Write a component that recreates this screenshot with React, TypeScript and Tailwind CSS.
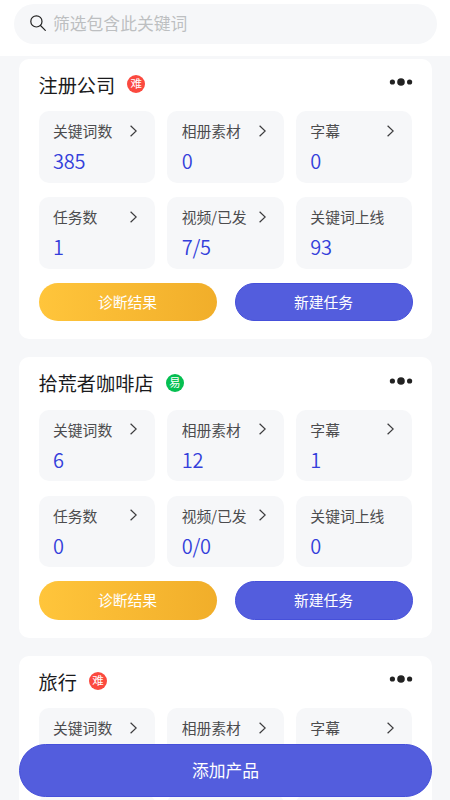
type Stat = { label: string; value: string; arrow?: boolean };
type Product = { name: string; level: "难" | "易"; stats: Stat[]; pending?: boolean };

const labels = ["关键词数", "相册素材", "字幕", "任务数", "视频/已发", "关键词上线"];

const makeStats = (values: string[]): Stat[] =>
  values.map((value, i) => ({ label: labels[i], value, arrow: i < 5 }));

const products: Product[] = [
  { name: "注册公司", level: "难", stats: makeStats(["385", "0", "0", "1", "7/5", "93"]) },
  { name: "拾荒者咖啡店", level: "易", stats: makeStats(["6", "12", "1", "0", "0/0", "0"]) },
  { name: "旅行", level: "难", stats: makeStats(["", "", ""]), pending: true },
];

function SearchIcon() {
  return (
    <svg className="-mt-0.5 h-4 w-4 shrink-0" viewBox="0 0 16 16" fill="none" stroke="#222" strokeWidth="1.2" strokeLinecap="round">
      <circle cx="6.4" cy="6.4" r="5.6" />
      <path d="M10.5 10.5L15.3 15.3" />
    </svg>
  );
}

function Chevron() {
  return (
    <svg className="-mt-px h-3 w-[7px] shrink-0" viewBox="0 0 7 12" fill="none" stroke="#3c3c3e" strokeWidth="1.2">
      <path d="M0.6 0.7L6.2 6L0.6 11.3" />
    </svg>
  );
}

function MoreIcon() {
  return (
    <svg className="h-2 w-6" viewBox="0 0 24 8" fill="#222">
      <circle cx="3.4" cy="4" r="2.6" />
      <circle cx="12" cy="4" r="3.8" />
      <circle cx="20.6" cy="4" r="2.6" />
    </svg>
  );
}

function StatTile({ stat }: { stat: Stat }) {
  return (
    <div className="h-[71.5px] rounded-[10px] bg-[#f6f7f9] pl-[14.5px] pr-[18px] pt-2.5">
      <div className="flex h-5 items-center justify-between whitespace-nowrap text-[14.8px] leading-5 text-[#4c4c4e]">
        <span>{stat.label}</span>
        {stat.arrow && <Chevron />}
      </div>
      <div className="mt-2 text-[20px] font-[350] leading-6 tracking-[-0.2px] text-[#343fdb]">{stat.value}</div>
    </div>
  );
}

function ProductCard({ product }: { product: Product }) {
  return (
    <section className="h-[280.5px] shrink-0 rounded-[10px] bg-white px-[19.5px]">
      <div className="flex h-[52.5px] items-center justify-between">
        <div className="flex items-center gap-3">
          <h2 className="-mt-px text-[19.2px] leading-7 text-[#1b1b1d]">{product.name}</h2>
          <span
            className={`-mt-0.5 flex h-[18px] w-[18px] items-center justify-center rounded-full text-[11.5px] leading-none text-white ${
              product.level === "难" ? "bg-[#fb493f]" : "bg-[#05bf51]"
            }`}
          >
            {product.level}
          </span>
        </div>
        <button className="mb-1.5" aria-label="更多">
          <MoreIcon />
        </button>
      </div>
      <div className="grid grid-cols-3 gap-x-3 gap-y-[14.5px]">
        {product.stats.map((stat) => (
          <StatTile key={stat.label} stat={stat} />
        ))}
        {product.pending &&
          [0, 1, 2].map((i) => <div key={i} className="h-[71.5px] rounded-[10px] bg-[#f6f7f9]" />)}
      </div>
      {!product.pending && (
        <div className="mt-3.5 grid grid-cols-2 gap-[18px] text-[14.8px] text-white">
          <button className="h-[38.5px] rounded-full bg-linear-to-r from-[#ffc53b] to-[#f1ae2a]">诊断结果</button>
          <button className="h-[38.5px] rounded-full border border-[#4650da] bg-[#535ddd]">新建任务</button>
        </div>
      )}
    </section>
  );
}

export default function App() {
  return (
    <div className="relative flex h-[800px] w-[450px] flex-col overflow-hidden bg-[#f6f7f9] font-['Noto_Sans_CJK_SC',sans-serif]">
      <header className="h-14 shrink-0 bg-white pl-3.5 pr-[13px] pt-[3.5px]">
        <div className="flex h-10 items-center gap-[7px] rounded-full bg-[#f6f7f9] pl-4">
          <SearchIcon />
          <span className="-mt-0.5 text-[16.8px] leading-6 text-[#bdbfc1]">筛选包含此关键词</span>
        </div>
      </header>
      <main className="flex flex-col gap-[18px] pl-[19px] pr-[18px] pt-[2.75px]">
        {products.map((product) => (
          <ProductCard key={product.name} product={product} />
        ))}
      </main>
      <button className="absolute left-[19px] top-[743.5px] h-[53.5px] w-[413px] rounded-full border border-[#4650da] bg-[#535ddd] text-[16.8px] text-white">
        添加产品
      </button>
    </div>
  );
}
